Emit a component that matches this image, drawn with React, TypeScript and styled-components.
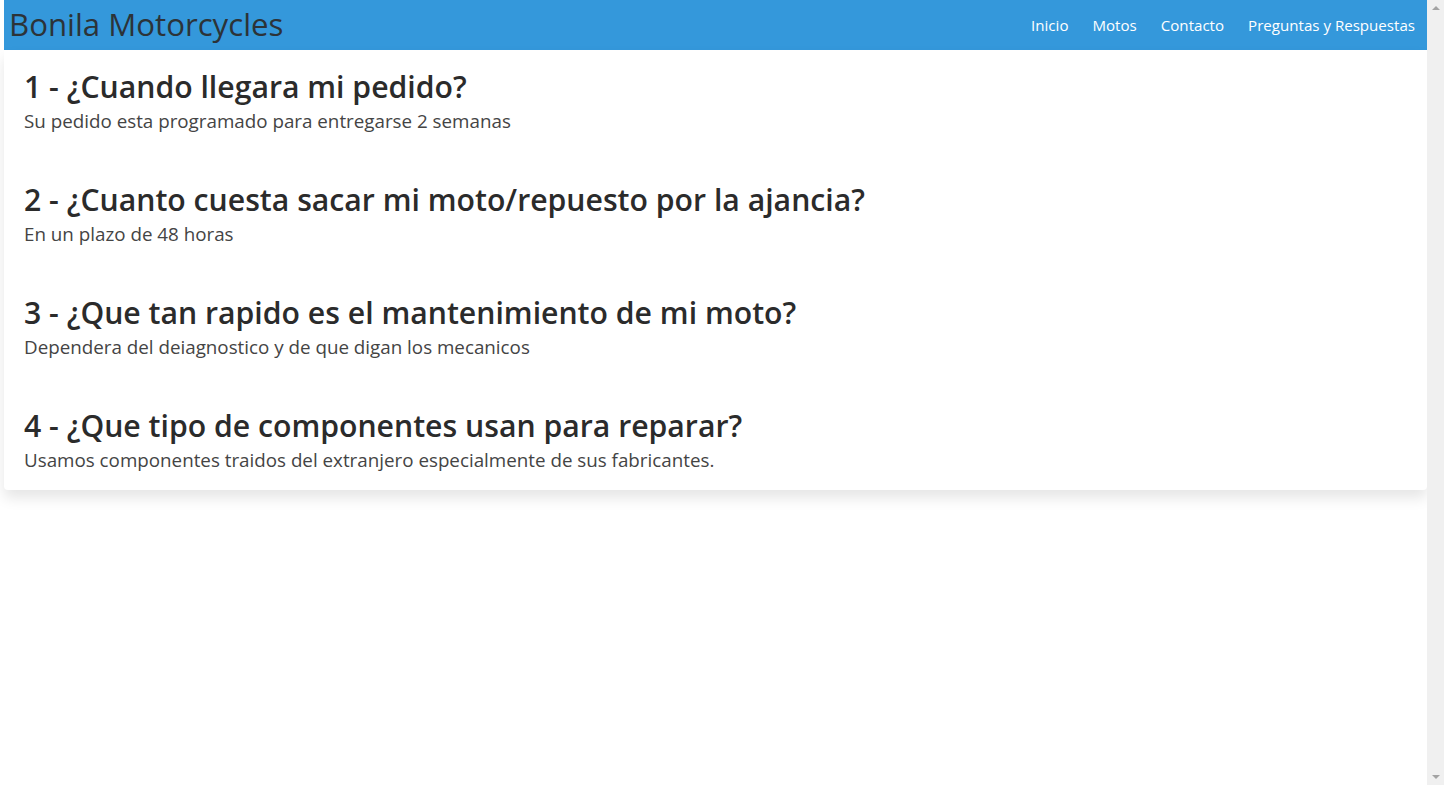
import styled, { createGlobalStyle } from "styled-components";

type FaqType = {
    question: string
    answer: string
}

const faqs: FaqType[] = [
    { question: "1 - ¿Cuando llegara mi pedido?", answer: "Su pedido esta programado para entregarse 2 semanas" },
    { question: "2 - ¿Cuanto cuesta sacar mi moto/repuesto por la ajancia?", answer: "En un plazo de 48 horas" },
    { question: "3 - ¿Que tan rapido es el mantenimiento de mi moto?", answer: "Dependera del deiagnostico y de que digan los mecanicos" },
    { question: "4 - ¿Que tipo de componentes usan para reparar?", answer: "Usamos componentes traidos del extranjero especialmente de sus fabricantes." },
]

const links = ["Inicio", "Motos", "Contacto", "Preguntas y Respuestas"]

export const App = () => {
    return (
        <>
            <GlobalStyle/>
            <Screen>
                <Page>
                    <Header>
                        <Brand>Bonila Motorcycles</Brand>
                        <Nav>
                            {links.map(l => <NavLink key={l} href={"#"}>{l}</NavLink>)}
                        </Nav>
                    </Header>
                    <Card>
                        {faqs.map(f => (
                            <Item key={f.question}>
                                <Question>{f.question}</Question>
                                <Answer>{f.answer}</Answer>
                            </Item>
                        ))}
                    </Card>
                </Page>
                <Scrollbar>
                    <Arrow $up/>
                    <Arrow/>
                </Scrollbar>
            </Screen>
        </>
    );
};

export default App;

const GlobalStyle = createGlobalStyle`
    html, body {
        margin: 0;
        padding: 0;
        background: #ffffff;
    }
    body {
        font-family: "Open Sans", "Noto Sans", sans-serif;
        color: #333333;
    }
`

const Screen = styled.div`
    display: flex;
    height: 785px;
    overflow: hidden;
`

const Page = styled.div`
    flex: 1;
    padding-left: 4px;
`

const Header = styled.header`
    display: flex;
    align-items: center;
    justify-content: space-between;
    height: 50px;
    background-color: #3498db;
    padding: 0 12px 0 5px;
`

const Brand = styled.div`
    font-size: 31.2px;
    color: #2c3338;
    line-height: 48px;
    padding-bottom: 2px;
`

const Nav = styled.nav`
    display: flex;
    gap: 24px;
`

const NavLink = styled.a`
    color: #ffffff;
    font-size: 15.1px;
    text-decoration: none;
`

const Card = styled.main`
    background: #ffffff;
    padding: 17px 20px 16px;
    border-radius: 0 0 4px 4px;
    box-shadow: 0 8px 14px rgba(0, 0, 0, 0.1);
    display: flex;
    flex-direction: column;
    gap: 45px;
`

const Item = styled.section`
    display: flex;
    flex-direction: column;
`

const Question = styled.h2`
    margin: 0;
    font-size: 30.2px;
    font-weight: 600;
    line-height: 40px;
    color: #2b2b2b;
`

const Answer = styled.p`
    margin: 0;
    font-size: 18.8px;
    line-height: 28px;
    color: #444444;
`

const Scrollbar = styled.div`
    width: 17px;
    background: #f0f0f0;
    display: flex;
    flex-direction: column;
    justify-content: space-between;
    align-items: center;
    padding: 6px 0;
`

const Arrow = styled.div<{ $up?: boolean }>`
    width: 0;
    height: 0;
    border-left: 4px solid transparent;
    border-right: 4px solid transparent;
    ${p => p.$up ? "border-bottom: 4px solid #a3a3a3;" : "border-top: 4px solid #a3a3a3;"}
`
